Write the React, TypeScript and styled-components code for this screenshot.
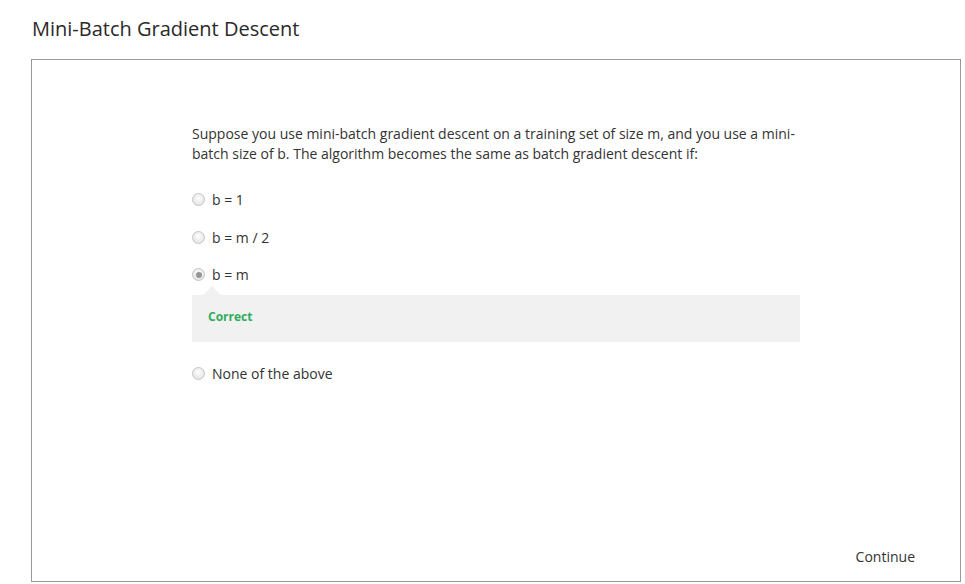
import React from "react";
import styled, { createGlobalStyle } from "styled-components";

const Global = createGlobalStyle`
  html, body { margin: 0; padding: 0; background: #fff; }
  body { font-family: "Open Sans", "Liberation Sans", sans-serif; color: #333; }
`;

const Page = styled.div`
  width: 965px;
  height: 584px;
  padding: 0 0 0 31px;
  box-sizing: border-box;
  display: flex;
  flex-direction: column;
`;

const Title = styled.h1`
  margin: 0;
  padding: 15px 0 0 1px;
  height: 59px;
  box-sizing: border-box;
  font-size: 20px;
  font-weight: 400;
  line-height: 28px;
  color: #2a2a2a;
`;

const Card = styled.div`
  width: 930px;
  height: 523px;
  box-sizing: border-box;
  border: 1px solid #999;
  padding: 64px 160px 0 160px;
  display: flex;
  flex-direction: column;
  position: relative;
`;

const Question = styled.p`
  margin: 0 0 17px;
  font-size: 14px;
  line-height: 20px;
  color: #333;
`;

const Options = styled.div`
  display: flex;
  flex-direction: column;
`;

const Option = styled.label`
  display: flex;
  align-items: center;
  height: 37.5px;
  font-size: 14px;
  color: #333;
`;

const Radio = styled.span<{ $checked?: boolean }>`
  width: 13px;
  height: 13px;
  border-radius: 50%;
  box-sizing: border-box;
  border: 1px solid #c4c4c4;
  background: radial-gradient(circle at 50% 40%, #fdfdfd, #dedede);
  margin-right: 7px;
  position: relative;
  &::after {
    content: "";
    display: ${(p) => (p.$checked ? "block" : "none")};
    position: absolute;
    left: 2.5px;
    top: 2.5px;
    width: 6px;
    height: 6px;
    border-radius: 50%;
    background: #959595;
  }
`;

const Feedback = styled.div`
  position: relative;
  margin-top: 1px;
  height: 47px;
  box-sizing: border-box;
  background: #f1f1f1;
  display: flex;
  align-items: center;
  padding: 0 0 3px 16px;
  margin-bottom: 13px;
  &::before {
    content: "";
    position: absolute;
    left: 11px;
    top: -9px;
    border-left: 9px solid transparent;
    border-right: 9px solid transparent;
    border-bottom: 9px solid #f1f1f1;
  }
`;

const Correct = styled.span`
  color: #2fad5c;
  font-weight: 700;
  font-size: 12px;
`;

const Continue = styled.button`
  position: absolute;
  right: 45px;
  bottom: 15px;
  background: none;
  border: none;
  padding: 0;
  font-family: "Open Sans", "Liberation Sans", sans-serif;
  font-size: 14px;
  color: #333;
  cursor: pointer;
`;

export default function App() {
  return (
    <>
      <Global />
      <Page>
        <Title>Mini-Batch Gradient Descent</Title>
        <Card>
          <Question>
            Suppose you use mini-batch gradient descent on a training set of size m, and you use a mini-batch size of b. The algorithm becomes the same as batch gradient descent if:
          </Question>
          <Options>
            <Option><Radio />b = 1</Option>
            <Option><Radio />b = m / 2</Option>
            <Option><Radio $checked />b = m</Option>
            <Feedback><Correct>Correct</Correct></Feedback>
            <Option><Radio />None of the above</Option>
          </Options>
          <Continue>Continue</Continue>
        </Card>
      </Page>
    </>
  );
}
